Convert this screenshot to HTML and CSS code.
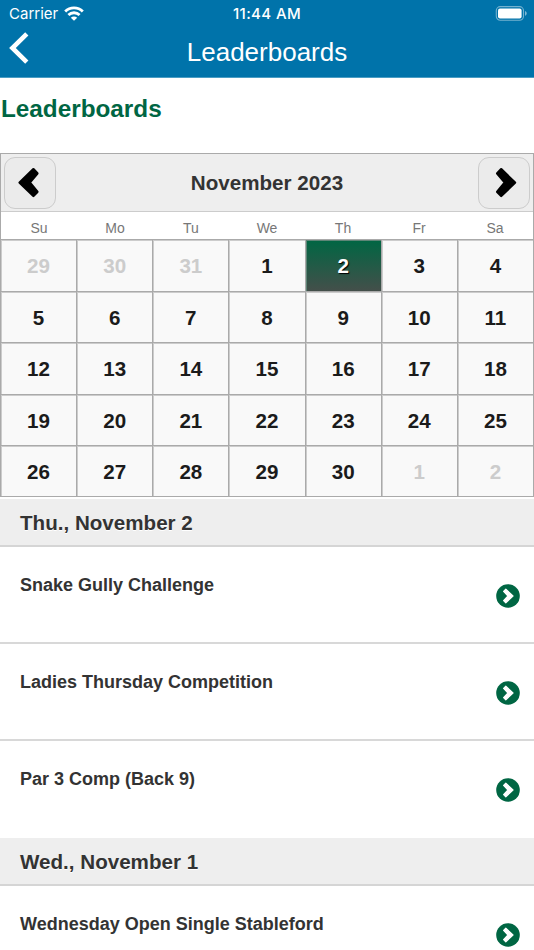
FILE: index.html
```html
<!DOCTYPE html>
<html lang="en">
<head>
  <meta charset="UTF-8">
  <meta name="viewport" content="width=device-width, initial-scale=1.0">
  <title>Leaderboards</title>
  <link rel="stylesheet" href="styles.css">
</head>
<body>
  <header class="app-header">
    <div class="status-bar">
      <div class="status-left">
        <span class="carrier">Carrier</span>
        <svg class="wifi" width="20" height="15" viewBox="0 0 20 15">
          <g fill="none" stroke="#fff" stroke-width="2.8">
            <path d="M1.2 5.4C6 .6 14 .6 18.8 5.4"/>
            <path d="M4.4 9C7.5 6 12.5 6 15.6 9"/>
          </g>
          <path fill="#fff" d="M10 14.8L6.8 11.8C8.6 10 11.4 10 13.2 11.8z"/>
        </svg>
      </div>
      <span class="time">11:44 AM</span>
      <div class="status-right">
        <svg width="32" height="15" viewBox="0 0 32 15">
          <rect x=".3" y=".6" width="27.2" height="13.6" rx="4" fill="none" stroke="#fff" stroke-opacity=".45" stroke-width="1.1"/>
          <rect x="2" y="2.4" width="23.6" height="10" rx="2" fill="#fff"/>
          <path d="M29 5.1c2.3.9 2.3 3.9 0 4.8z" fill="#fff" fill-opacity=".5"/>
        </svg>
      </div>
    </div>
    <div class="nav-bar">
      <a href="#" class="back-btn" aria-label="Back">
        <svg width="20" height="32" viewBox="0 0 20 32">
          <path d="M17.8 1.8L3.4 16L17.8 30.2" fill="none" stroke="#fff" stroke-width="4.6"/>
        </svg>
      </a>
      <h1>Leaderboards</h1>
    </div>
  </header>

  <h2 class="page-title">Leaderboards</h2>

  <div class="calendar">
    <div class="cal-header">
      <button type="button" class="cal-btn" aria-label="Previous month">
        <svg width="50" height="50" viewBox="0 0 50 50">
          <path d="M28.4 11.2L32.4 15.4L24.8 24.6L32.4 33.8L28.4 38L14.6 24.6z" fill="#000" stroke="#000" stroke-width="2.4" stroke-linejoin="round"/>
        </svg>
      </button>
      <span class="cal-month">November 2023</span>
      <button type="button" class="cal-btn" aria-label="Next month">
        <svg width="50" height="50" viewBox="0 0 50 50">
          <path d="M22.2 11.2L18.2 15.4L25.8 24.6L18.2 33.8L22.2 38L36 24.6z" fill="#000" stroke="#000" stroke-width="2.4" stroke-linejoin="round"/>
        </svg>
      </button>
    </div>
    <div class="cal-week">
      <span>Su</span><span>Mo</span><span>Tu</span><span>We</span><span>Th</span><span>Fr</span><span>Sa</span>
    </div>
    <div class="cal-days">
      <a class="other">29</a><a class="other">30</a><a class="other">31</a><a>1</a><a class="selected">2</a><a>3</a><a>4</a>
      <a>5</a><a>6</a><a>7</a><a>8</a><a>9</a><a>10</a><a>11</a>
      <a>12</a><a>13</a><a>14</a><a>15</a><a>16</a><a>17</a><a>18</a>
      <a>19</a><a>20</a><a>21</a><a>22</a><a>23</a><a>24</a><a>25</a>
      <a>26</a><a>27</a><a>28</a><a>29</a><a>30</a><a class="other">1</a><a class="other">2</a>
    </div>
  </div>

  <svg width="0" height="0" class="defs">
    <symbol id="go" viewBox="0 0 24 24">
      <circle cx="12" cy="12" r="11.8" fill="#006643"/>
      <path d="M9.8 5.2L17 12L9.8 18.8L7.6 16.6L12 12L7.6 7.4z" fill="#fff" stroke="#fff" stroke-width="1.2" stroke-linejoin="round"/>
    </symbol>
  </svg>

  <ul class="events">
    <li class="date">Thu., November 2</li>
    <li class="event"><span>Snake Gully Challenge</span><svg class="go"><use href="#go"/></svg></li>
    <li class="event"><span>Ladies Thursday Competition</span><svg class="go"><use href="#go"/></svg></li>
    <li class="event last"><span>Par 3 Comp (Back 9)</span><svg class="go"><use href="#go"/></svg></li>
    <li class="date">Wed., November 1</li>
    <li class="event"><span>Wednesday Open Single Stableford</span><svg class="go"><use href="#go"/></svg></li>
  </ul>
</body>
</html>
```
FILE: styles.css
```css
* {
  box-sizing: border-box;
}
body {
  margin: 0;
  height: 950px;
  overflow: hidden;
  background: #fff;
  color: #333;
  font-family: "Liberation Sans", Arial, sans-serif;
}
.app-header {
  height: 78px;
  background: #0073aa;
  border-bottom: 1px solid #4a9dc4;
  color: #fff;
}
.status-bar {
  display: grid;
  grid-template-columns: 1fr auto 1fr;
  align-items: center;
  height: 27px;
  padding: 0 6px 0 9px;
  font-family: Inter, sans-serif;
  font-size: 15px;
}
.status-left {
  display: flex;
  align-items: center;
  gap: 6px;
}
.wifi {
  margin-top: -1px;
}
.time {
  margin-left: -3px;
  font-weight: 500;
  letter-spacing: 0.4px;
}
.status-right {
  display: flex;
  justify-content: flex-end;
}
.status-right svg {
  overflow: visible;
}
.nav-bar {
  display: grid;
  grid-template-columns: 40px 1fr 40px;
  align-items: center;
  height: 51px;
}
.back-btn {
  padding: 0 0 10px 9px;
}
.back-btn svg {
  display: block;
}
.nav-bar h1 {
  margin: 0;
  font-size: 26px;
  font-weight: normal;
  text-align: center;
}
.page-title {
  height: 75px;
  margin: 0;
  padding: 17px 0 0 1px;
  color: #006643;
  font-size: 24.3px;
  line-height: 28px;
}
.calendar {
  border: solid #aaa;
  border-width: 1px 1px 0;
}
.cal-header {
  display: flex;
  align-items: center;
  justify-content: space-between;
  height: 58px;
  padding: 0 3px;
  background: #eee;
  border-bottom: 1px solid #ccc;
}
.cal-btn {
  width: 52px;
  height: 52px;
  padding: 0;
  background: #ebebeb;
  border: 1px solid #ccc;
  border-radius: 11px;
}
.cal-btn svg {
  display: block;
}
.cal-month {
  font-size: 20.6px;
  font-weight: bold;
}
.cal-week {
  display: grid;
  grid-template-columns: repeat(7, 1fr);
  height: 27px;
  color: #777;
  font-size: 14px;
  line-height: 33px;
  text-align: center;
}
.cal-days {
  display: grid;
  grid-template-columns: repeat(7, 1fr);
  grid-template-rows: 51px 50px 51px 50px 50px;
  gap: 1px;
  padding: 1px 0;
  background: #aaa;
}
.cal-days a {
  background: #f9f9f9;
  box-shadow: inset 1px 1px 0 #ccc;
  color: #1b1b1b;
  font-size: 20.6px;
  font-weight: bold;
  line-height: 52px;
  text-align: center;
}
.cal-days .other {
  color: #ccc;
}
.cal-days .selected {
  background: linear-gradient(#006643, #444f4a);
  box-shadow: inset 1px 1px 0 #5f8577;
  color: #fff;
  text-shadow: 1px 1px 1px #000;
}
.defs {
  display: block;
}
.events {
  margin: 2px 0 0;
  padding: 0;
  list-style: none;
}
.date {
  height: 48px;
  padding-left: 20px;
  background: #eee;
  border-bottom: 2px solid #d5d5d5;
  font-size: 20.6px;
  font-weight: bold;
  line-height: 48px;
  text-shadow: 0 1px 0 #fff;
}
.event {
  display: flex;
  justify-content: space-between;
  height: 97px;
  padding: 28px 14px 0 20px;
  border-bottom: 2px solid #d8d8d8;
  font-size: 18px;
  font-weight: bold;
  line-height: 21px;
}
.event.last {
  border-bottom: 0;
}
.go {
  width: 24px;
  height: 24px;
  margin-top: 9px;
}
```
